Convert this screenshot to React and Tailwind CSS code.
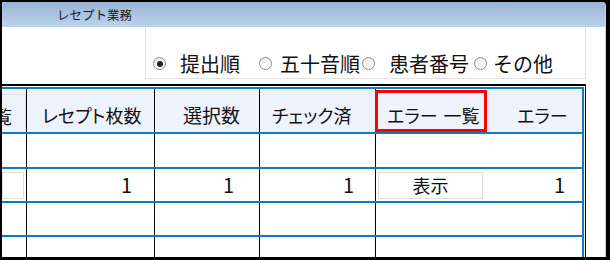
import React from 'react';

const font = "font-['Noto_Sans_CJK_JP','Noto_Sans',sans-serif]";

function Radio({ checked }) {
  return (
    <span className="w-[13px] h-[13px] shrink-0 rounded-full border border-[#8c8c8c] bg-gradient-to-b from-[#ececec] to-white flex items-center justify-center">
      {checked && <span className="w-[6px] h-[6px] rounded-full bg-[#222]" />}
    </span>
  );
}

function Row({ children, first }) {
  return (
    <div className={`flex ${first ? 'h-[35px]' : 'h-[34px]'} border-b-2 border-[#0b7dc1] shrink-0`}>
      {children}
    </div>
  );
}

function Cells({ data }) {
  return (
    <>
      <div className="w-[25px] shrink-0 border-r border-black pt-[3px]">
        {data && <div className="w-[22px] h-[27px] border border-[#dedede] bg-white" />}
      </div>
      <div className="w-[128px] shrink-0 border-r border-black flex items-center justify-end pr-[22px] text-[20px] text-[#111]">{data && '1'}</div>
      <div className="w-[105px] shrink-0 border-r border-black flex items-center justify-end pr-[25px] text-[20px] text-[#111]">{data && '1'}</div>
      <div className="w-[116px] shrink-0 border-r border-black flex items-center justify-end pr-[21px] text-[20px] text-[#111]">{data && '1'}</div>
      <div className="w-[110px] shrink-0 pl-[2px] pt-[3px]">
        {data && (
          <div className="w-[105px] h-[27px] border border-[#dedede] bg-white flex items-center justify-center text-[18px] text-[#111]">表示</div>
        )}
      </div>
      <div className="flex-1 flex items-center justify-end pr-[17px] text-[20px] text-[#111]">{data && '1'}</div>
    </>
  );
}

export default function App() {
  return (
    <div className={`w-[610px] h-[260px] bg-black pt-[2px] pl-[2px] pr-[4px] pb-[3px] ${font}`}>
      <div className="h-full bg-white flex flex-col border-r border-[#c5d3e2] rounded-tr-[4px] overflow-hidden">
        <div className="h-[25px] shrink-0 bg-gradient-to-b from-[#9ab4d4] to-[#bcd3ec] pl-[55px] text-[12.5px] leading-[25px] text-[#1b1b2a]">
          レセプト業務
        </div>

        <div className="h-[52px] shrink-0 ml-[143px] w-[441px] border-x border-b border-[#e2e2e2] flex items-center pt-[22px] pl-[7px] text-[20px] leading-none text-[#111]">
          <Radio checked />
          <span className="ml-[14px]">提出順</span>
          <span className="ml-[19px]"><Radio /></span>
          <span className="ml-[8px]">五十音順</span>
          <span className="ml-[2px]"><Radio /></span>
          <span className="ml-[14px]">患者番号</span>
          <span className="ml-[5px]"><Radio /></span>
          <span className="ml-[6px]">その他</span>
        </div>

        <div className="mt-[5px] w-[584px] flex-1 min-h-0 border-t-2 border-r border-black pt-[1px] pr-[1px] relative overflow-hidden">
          <div className="h-full border-t-2 border-r-2 border-[#0b7dc1] flex flex-col">
            <div className="flex h-[45px] shrink-0 bg-[#eef3fb] border-b-2 border-[#0b7dc1] text-[18px] text-[#111] [font-feature-settings:'palt']">
              <div className="w-[25px] shrink-0 border-r border-black pt-[5px] overflow-hidden">
                <div className="h-full w-[24px] border-t border-r border-[#dedede] flex items-center pt-[6px] overflow-hidden">
                  <span className="-ml-[8px]">覧</span>
                </div>
              </div>
              <div className="w-[128px] shrink-0 border-r border-black flex items-center pt-[10px] pl-[15px]">レセプト枚数</div>
              <div className="w-[105px] shrink-0 border-r border-black flex items-center pt-[10px] pl-[28px] text-[19px]">選択数</div>
              <div className="w-[116px] shrink-0 border-r border-black flex items-center pt-[10px] pl-[12px]">チェック済</div>
              <div className="w-[110px] shrink-0 flex items-center pt-[10px] pl-[11px]">
                <span>エラー</span>
                <span className="ml-[6px]">一覧</span>
              </div>
              <div className="flex-1 flex items-center pt-[10px] pl-[31px]">エラー</div>
            </div>
            <Row first><Cells /></Row>
            <Row><Cells data /></Row>
            <Row><Cells /></Row>
            <Row><Cells /></Row>
          </div>
          <div className="absolute left-[373px] top-[4px] w-[112px] h-[42px] border-[3px] border-[#ff0000]" />
        </div>
      </div>
    </div>
  );
}
